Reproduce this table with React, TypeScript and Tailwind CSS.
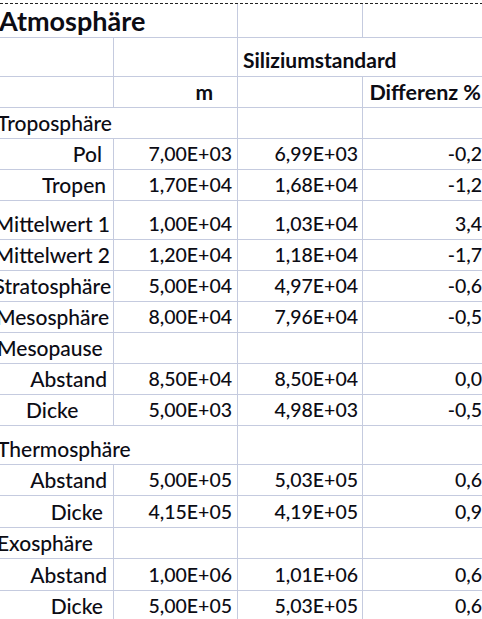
import React from "react";

type Row = {
  h: string;
  a: string;
  aCls: string;
  aBorder: boolean;
  b: string;
  c: string;
  d: string;
};

const rows: Row[] = [
  { h: "h-[31px]", a: "Troposphäre", aCls: "justify-start", aBorder: false, b: "", c: "", d: "" },
  { h: "h-[31px]", a: "Pol", aCls: "justify-end pr-[11px]", aBorder: true, b: "7,00E+03", c: "6,99E+03", d: "-0,2" },
  { h: "h-[31px]", a: "Tropen", aCls: "justify-end pr-[7px]", aBorder: true, b: "1,70E+04", c: "1,68E+04", d: "-1,2" },
  { h: "h-[39px]", a: "Mittelwert 1", aCls: "justify-end pr-[3px]", aBorder: true, b: "1,00E+04", c: "1,03E+04", d: "3,4" },
  { h: "h-[31px]", a: "Mittelwert 2", aCls: "justify-end pr-[3px]", aBorder: true, b: "1,20E+04", c: "1,18E+04", d: "-1,7" },
  { h: "h-[31px]", a: "Stratosphäre", aCls: "justify-end pr-[2px]", aBorder: true, b: "5,00E+04", c: "4,97E+04", d: "-0,6" },
  { h: "h-[31px]", a: "Mesosphäre", aCls: "justify-end pr-[4px]", aBorder: true, b: "8,00E+04", c: "7,96E+04", d: "-0,5" },
  { h: "h-[31px]", a: "Mesopause", aCls: "justify-start", aBorder: true, b: "", c: "", d: "" },
  { h: "h-[31px]", a: "Abstand", aCls: "justify-end pr-[6px]", aBorder: true, b: "8,50E+04", c: "8,50E+04", d: "0,0" },
  { h: "h-[31px]", a: "Dicke", aCls: "justify-start pl-[26px]", aBorder: true, b: "5,00E+03", c: "4,98E+03", d: "-0,5" },
  { h: "h-[39px]", a: "Thermosphäre", aCls: "justify-start", aBorder: false, b: "", c: "", d: "" },
  { h: "h-[31px]", a: "Abstand", aCls: "justify-end pr-[6px]", aBorder: true, b: "5,00E+05", c: "5,03E+05", d: "0,6" },
  { h: "h-[32px]", a: "Dicke", aCls: "justify-end pr-[10px]", aBorder: true, b: "4,15E+05", c: "4,19E+05", d: "0,9" },
  { h: "h-[31px]", a: "Exosphäre", aCls: "justify-start", aBorder: true, b: "", c: "", d: "" },
  { h: "h-[32px]", a: "Abstand", aCls: "justify-end pr-[6px]", aBorder: true, b: "1,00E+06", c: "1,01E+06", d: "0,6" },
  { h: "h-[31px]", a: "Dicke", aCls: "justify-end pr-[10px]", aBorder: true, b: "5,00E+05", c: "5,03E+05", d: "0,6" },
];

export default function App() {
  return (
    <div
      className="w-[482px] h-[619px] overflow-hidden bg-white text-[#0c0c14] pt-[3px]"
      style={{ fontFamily: "Lato, 'Open Sans', sans-serif" }}
    >
      <div className="w-[488px] border-t border-dashed border-[#222]">
        {/* Title row */}
        <div className="flex h-[34px] border-b border-[#c5cbdf]">
          <div className="w-[238px] flex items-end justify-start pb-[1px] border-r border-[#c5cbdf] whitespace-nowrap">
            <span className="text-[27px] leading-[30px] font-bold ml-[-1px]">Atmosphäre</span>
          </div>
          <div className="w-[125px] border-r border-[#c5cbdf]" />
          <div className="w-[125px]" />
        </div>
        {/* Siliziumstandard row */}
        <div className="flex h-[39px] border-b border-[#c5cbdf]">
          <div className="w-[114px] border-r border-[#c5cbdf]" />
          <div className="w-[124px] border-r border-[#c5cbdf]" />
          <div className="w-[250px] flex items-end pb-[4px] pl-[5px] whitespace-nowrap">
            <span className="text-[21px] leading-[24px] font-bold">Siliziumstandard</span>
          </div>
        </div>
        {/* Header row */}
        <div className="flex h-[31px] border-b border-[#c5cbdf]">
          <div className="w-[114px] border-r border-[#c5cbdf]" />
          <div className="w-[124px] flex items-end justify-end pb-[3px] pr-[24px] border-r border-[#c5cbdf]">
            <span className="text-[21px] leading-[24px] font-bold">m</span>
          </div>
          <div className="w-[125px] border-r border-[#c5cbdf]" />
          <div className="w-[125px] flex items-end justify-end pb-[3px] pr-[7px] whitespace-nowrap">
            <span className="text-[21.5px] leading-[24px] font-bold">Differenz %</span>
          </div>
        </div>
        {rows.map((r, i) => (
          <div key={i} className={`flex border-b border-[#c5cbdf] ${r.h}`}>
            <div
              className={`w-[114px] flex items-end pb-[3px] whitespace-nowrap ${r.aCls} ${
                r.aBorder ? "border-r border-[#c5cbdf]" : "border-r border-transparent"
              }`}
            >
              <span
                className={`text-[21px] leading-[24px] font-medium ${
                  r.aCls.includes("justify-start") && !r.aCls.includes("pl-") ? "ml-[-3px]" : ""
                }`}
              >
                {r.a}
              </span>
            </div>
            <div className="w-[124px] flex items-end justify-end pb-[3px] pr-[5px] border-r border-[#c5cbdf]">
              <span className="text-[19.5px] leading-[24px] font-medium">{r.b}</span>
            </div>
            <div className="w-[125px] flex items-end justify-end pb-[3px] pr-[4px] border-r border-[#c5cbdf]">
              <span className="text-[19.5px] leading-[24px] font-medium">{r.c}</span>
            </div>
            <div className="w-[125px] flex items-end justify-end pb-[3px] pr-[6px]">
              <span className="text-[19.5px] leading-[24px] font-medium">{r.d}</span>
            </div>
          </div>
        ))}
      </div>
    </div>
  );
}
